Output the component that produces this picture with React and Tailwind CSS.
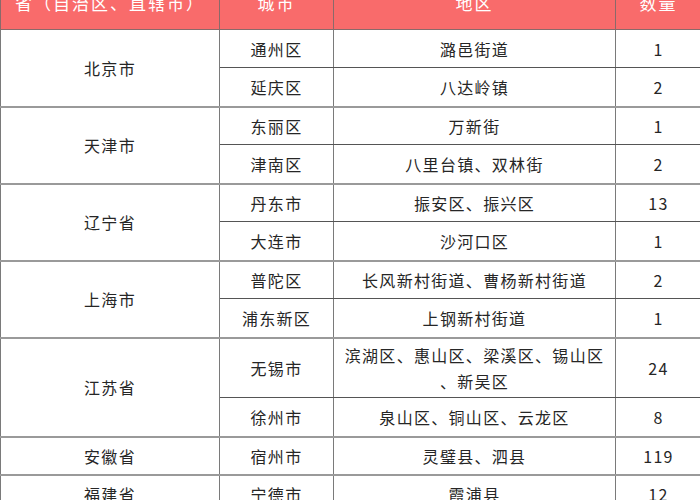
import React from "react";

const groups = [
  { p: "北京市", rows: [["通州区", "潞邑街道", "1", 38], ["延庆区", "八达岭镇", "2", 39]] },
  { p: "天津市", rows: [["东丽区", "万新街", "1", 38], ["津南区", "八里台镇、双林街", "2", 39]] },
  { p: "辽宁省", rows: [["丹东市", "振安区、振兴区", "13", 38], ["大连市", "沙河口区", "1", 39]] },
  { p: "上海市", rows: [["普陀区", "长风新村街道、曹杨新村街道", "2", 38], ["浦东新区", "上钢新村街道", "1", 39]] },
  {
    p: "江苏省",
    rows: [
      ["无锡市", (<>滨湖区、惠山区、梁溪区、锡山区<br />、新吴区</>), "24", 60],
      ["徐州市", "泉山区、铜山区、云龙区", "8", 39],
    ],
  },
  { p: "安徽省", rows: [["宿州市", "灵璧县、泗县", "119", 38]] },
  { p: "福建省", rows: [["宁德市", "霞浦县", "12", 39]] },
];

const font = { fontFamily: '"Noto Sans CJK SC", "Noto Sans", sans-serif' };

export default function App() {
  return (
    <div className="w-[700px] h-[500px] overflow-hidden bg-white" style={font}>
      <table className="-mt-[24px] w-[701px] table-fixed border-collapse text-[#262626] text-[16px] tracking-[1.3px]">
        <colgroup>
          <col className="w-[219px]" />
          <col className="w-[114px]" />
          <col className="w-[282px]" />
          <col className="w-[86px]" />
        </colgroup>
        <thead>
          <tr className="h-[53px] bg-[#f96b6b] text-white text-[17px] tracking-[2px]">
            <th className="font-normal border border-[#8a6a6a] p-0">省（自治区、直辖市）</th>
            <th className="font-normal border border-[#8a6a6a] p-0">城市</th>
            <th className="font-normal border border-[#8a6a6a] p-0">地区</th>
            <th className="font-normal border border-[#8a6a6a] p-0">数量</th>
          </tr>
        </thead>
        <tbody>
          {groups.map((g) =>
            g.rows.map((r, i) => {
              const last = i === g.rows.length - 1;
              const b = last ? "border-b-2 border-b-[#9a9a9a]" : "border-b border-b-[#555]";
              return (
                <tr key={g.p + i} style={{ height: r[3] }}>
                  {i === 0 && (
                    <td
                      rowSpan={g.rows.length}
                      className="border border-[#7a7a7a] border-b-2 border-b-[#9a9a9a] text-center align-middle p-0"
                    >
                      {g.p}
                    </td>
                  )}
                  <td className={`border border-[#7a7a7a] ${b} text-center align-middle p-0`}>{r[0]}</td>
                  <td className={`border border-[#7a7a7a] ${b} text-center align-middle px-2 py-0 leading-[26px]`}>{r[1]}</td>
                  <td className={`border border-[#7a7a7a] ${b} text-center align-middle p-0`}>{r[2]}</td>
                </tr>
              );
            })
          )}
        </tbody>
      </table>
    </div>
  );
}
